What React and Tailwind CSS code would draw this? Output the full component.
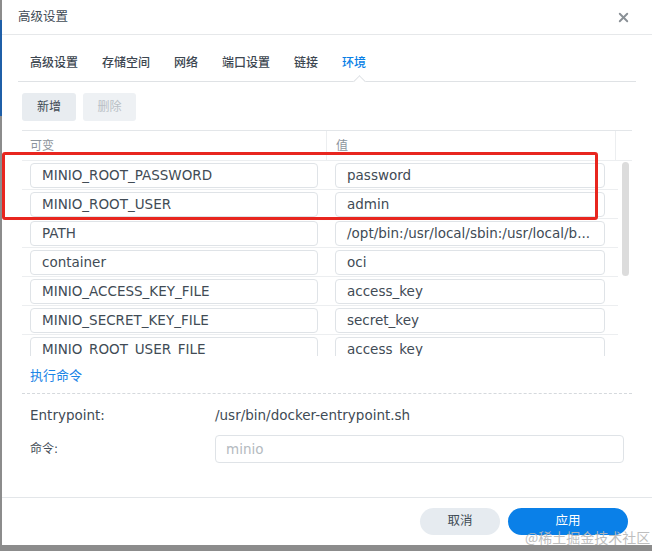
import { X } from 'lucide-react'

const rows = [
  { name: 'MINIO_ROOT_PASSWORD', value: 'password' },
  { name: 'MINIO_ROOT_USER', value: 'admin' },
  { name: 'PATH', value: '/opt/bin:/usr/local/sbin:/usr/local/b...' },
  { name: 'container', value: 'oci' },
  { name: 'MINIO_ACCESS_KEY_FILE', value: 'access_key' },
  { name: 'MINIO_SECRET_KEY_FILE', value: 'secret_key' },
  { name: 'MINIO_ROOT_USER_FILE', value: 'access_key' },
]

const tabs = ['高级设置', '存储空间', '网络', '端口设置', '链接', '环境']

const font = { fontFamily: '"DejaVu Sans", "Noto Sans CJK SC", sans-serif' }

export default function App() {
  return (
    <div className="w-[652px] h-[551px] bg-[#8c8c8c] overflow-hidden relative" style={font}>
      {/* window behind, left edge */}
      <div className="absolute left-0 top-[20px] w-[2px] h-[96px] bg-[#1f5fa8]" />

      <div className="ml-[2px] w-[650px] h-[545px] bg-white flex flex-col text-[#414b55] relative">
        {/* Header */}
        <div className="h-[35px] shrink-0 flex items-center justify-between pl-[16px] pr-[21px] border-b border-[#e6e8ea]">
          <span className="text-[12.5px]">高级设置</span>
          <X size={15} strokeWidth={3} className="text-[#8a9096]" />
        </div>

        {/* Tabs */}
        <div className="mx-[16px] mt-[17px] flex border-b border-[#dfe2e5] h-[30px] relative">
          {tabs.map((t) => (
            <div
              key={t}
              className={
                'px-[12px] text-[12px] leading-[22px] font-medium ' +
                (t === '环境' ? 'text-[#0a7fe6]' : 'text-[#3c4650]')
              }
            >
              {t}
            </div>
          ))}
          <div className="absolute left-[337px] bottom-[-5px] w-[9px] h-[9px] bg-white border-l border-t border-[#dfe2e5] rotate-45" />
        </div>

        {/* Toolbar */}
        <div className="mx-[20px] mt-[11px] flex gap-[7px]">
          <button className="w-[54px] h-[28px] rounded-[3px] bg-[#e8ecf0] text-[12px] text-[#414b55]">新增</button>
          <button className="w-[53px] h-[28px] rounded-[3px] bg-[#eef1f4] text-[12px] text-[#b9bfc5]">删除</button>
        </div>

        {/* Table */}
        <div className="mx-[20px] mt-[9px] border-t border-[#e3e6e9] h-[226px] overflow-hidden">
          <div className="flex h-[30px] border-b border-[#eceef0] text-[12px] text-[#8c949c]">
            <div className="w-[305px] pl-[8px] pt-[6px] border-r border-[#eceef0]">可变</div>
            <div className="w-[289px] pl-[9px] pt-[6px] border-r border-[#eceef0]">值</div>
            <div className="flex-1" />
          </div>
          <div className="flex">
            <div className="w-[596px]">
              {rows.map((r) => (
                <div key={r.name} className="flex h-[29px] items-center border-b border-[#eceef0]">
                  <div className="ml-[8px] w-[288px] h-[25px] border border-[#dfe3e7] rounded-[4px] px-[11px] text-[13.5px] leading-[23px] text-[#414b55] whitespace-nowrap overflow-hidden">
                    {r.name}
                  </div>
                  <div className="ml-[17px] w-[270px] h-[25px] border border-[#dfe3e7] rounded-[4px] px-[11px] text-[13.5px] leading-[23px] text-[#414b55] whitespace-nowrap overflow-hidden">
                    {r.value}
                  </div>
                </div>
              ))}
            </div>
            <div className="flex-1 flex justify-center pt-[1px]">
              <div className="w-[7px] h-[114px] rounded-full bg-[#dcdcdc]" />
            </div>
          </div>
        </div>

        {/* Command section */}
        <div className="mx-[20px] mt-[7px] border-b border-dashed border-[#d5d9dd] pb-[6px] pl-[8px]">
          <span className="text-[13px] text-[#1a84e6]">执行命令</span>
        </div>
        <div className="mx-[28px] mt-[11px] flex items-center text-[13.5px] text-[#414b55]">
          <span className="w-[185px]">Entrypoint:</span>
          <span>/usr/bin/docker-entrypoint.sh</span>
        </div>
        <div className="mx-[28px] mt-[10px] flex items-center text-[#414b55]">
          <span className="w-[185px] text-[12px]">命令:</span>
          <div className="w-[409px] h-[28px] border border-[#dfe3e7] rounded-[4px] px-[10px] leading-[26px] text-[13.5px] text-[#b4bac0]">
            minio
          </div>
        </div>

        {/* Footer */}
        <div className="mt-auto h-[48px] border-t border-[#e3e6e9] flex items-center justify-end gap-[8px] pr-[24px]">
          <button className="w-[80px] h-[27px] rounded-full bg-[#e6ebf0] text-[12.5px] text-[#414b55]">取消</button>
          <button className="w-[120px] h-[27px] rounded-full bg-[#0a80e8] text-[12.5px] text-white">应用</button>
        </div>

        {/* Red annotation box */}
        <div className="absolute left-[0px] top-[152px] w-[596px] h-[68px] border-[3px] border-[#e8261f] rounded-[3px] pointer-events-none" />
      </div>

      {/* Watermark */}
      <div
        className="absolute left-[525px] top-[527px] text-[14px] text-[#b8b8b8] opacity-90 whitespace-nowrap"
        style={{ fontFamily: '"Noto Sans CJK SC", serif' }}
      >
        @稀土掘金技术社区
      </div>
    </div>
  )
}
